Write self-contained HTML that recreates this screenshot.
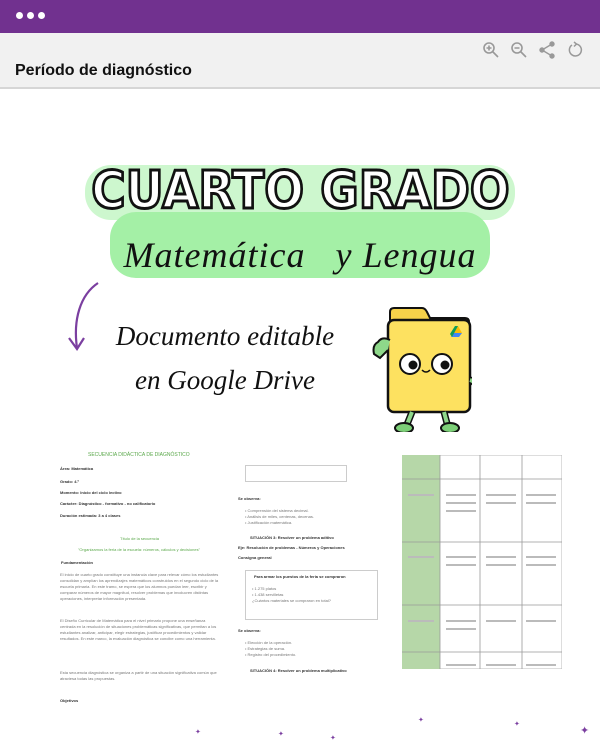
<!DOCTYPE html>
<html><head><meta charset="utf-8">
<style>
*{margin:0;padding:0;box-sizing:border-box}
body{width:600px;height:750px;overflow:hidden;background:#fff;font-family:"Liberation Sans",sans-serif;position:relative}
.top{position:absolute;left:0;top:0;width:600px;height:33px;background:#71318f}
.dot{position:absolute;top:12px;width:7px;height:7px;border-radius:50%;background:#fff}
.hdr{position:absolute;left:0;top:33px;width:600px;height:56px;background:#f1f1f1;border-bottom:2px solid #d6d6d6}
.hdr h1{position:absolute;left:15px;top:29px;font-size:16px;font-weight:bold;color:#111}
.ic{position:absolute;top:8px}
.t{position:absolute;font-size:4px;color:#777;line-height:6px}
.tb{position:absolute;font-size:4px;color:#333;font-weight:bold}
.star{position:absolute;color:#7b3fa0;font-size:7px}
</style></head><body>
<div class="top"><div class="dot" style="left:16px"></div><div class="dot" style="left:27px"></div><div class="dot" style="left:38px"></div></div>
<div class="hdr"><h1>Período de diagnóstico</h1>
<svg class="ic" style="left:482px" width="18" height="18" viewBox="0 0 18 18" fill="none" stroke="#999" stroke-width="1.6"><circle cx="7" cy="7" r="5"/><path d="M11 11l5 5M7 4.5v5M4.5 7h5"/></svg>
<svg class="ic" style="left:510px" width="18" height="18" viewBox="0 0 18 18" fill="none" stroke="#999" stroke-width="1.6"><circle cx="7" cy="7" r="5"/><path d="M11 11l5 5M4.5 7h5"/></svg>
<svg class="ic" style="left:538px" width="18" height="18" viewBox="0 0 18 18" fill="#999" stroke="#999" stroke-width="1.4"><circle cx="14" cy="3" r="2"/><circle cx="4" cy="9" r="2"/><circle cx="14" cy="15" r="2"/><path d="M14 3L4 9l10 6" fill="none"/></svg>
<svg class="ic" style="left:566px" width="18" height="18" viewBox="0 0 18 18" fill="none" stroke="#999" stroke-width="1.5"><path d="M6 4a6 6 0 1 0 4-1"/><path d="M8 1l2.5 2L8 5.5"/></svg>
</div>

<div style="position:absolute;left:110px;top:212px;width:380px;height:66px;background:#a4f0a6;border-radius:26px"></div>
<div style="position:absolute;left:85px;top:165px;width:430px;height:55px;background:#a4f0a6;border-radius:26px;opacity:.55"></div>
<div style="position:absolute;left:0;top:162px;width:600px;text-align:center;white-space:nowrap;font-size:52px;font-weight:bold;color:#fff;-webkit-text-stroke:3px #111;line-height:58px;font-family:'DejaVu Sans','Liberation Sans',sans-serif"><span style="display:inline-block;transform:scaleX(0.9)">CUARTO GRADO</span></div>
<div style="position:absolute;left:0;top:234px;width:600px;text-align:center;white-space:nowrap;font-family:'Liberation Serif',serif;font-style:italic;font-size:36px;color:#111;letter-spacing:1px">Matemática &nbsp;&nbsp;y Lengua</div>

<svg style="position:absolute;left:65px;top:280px" width="40" height="75" viewBox="0 0 40 75" fill="none" stroke="#7b3fa0" stroke-width="2.2"><path d="M33 3C15 15 8 40 12 68"/><path d="M4 58l8 11 7-11"/></svg>
<div style="position:absolute;left:95px;top:314px;width:260px;font-family:'Liberation Serif',serif;font-style:italic;font-size:27px;color:#111;text-align:center;line-height:44px;white-space:nowrap">Documento editable<br>en Google Drive</div>

<svg style="position:absolute;left:362px;top:300px" width="110" height="132" viewBox="0 0 110 132">
<path d="M28 26V12q0-4 4-4h28q3 0 5 4l3 6h35q4 0 4 4v8z" fill="#f6d24a" stroke="#111" stroke-width="2"/>
<rect x="26" y="20" width="82" height="92" rx="6" fill="#fde160" stroke="#111" stroke-width="2.5"/>
<path d="M28 40q-8-4-12 2-6 3-4 12l6 4 8-8" fill="#8ed88a" stroke="#111" stroke-width="2"/>
<path d="M108 80q10 3 6 20" fill="none" stroke="#111" stroke-width="7"/><path d="M108 80q10 3 6 20" fill="none" stroke="#8ed88a" stroke-width="4"/>
<path d="M50 112l-6 15M82 112l4 15" stroke="#111" stroke-width="7"/><path d="M50 112l-6 15M82 112l4 15" stroke="#8ed88a" stroke-width="4"/>
<ellipse cx="42" cy="128" rx="9" ry="5" fill="#7ccf77" stroke="#111" stroke-width="2"/><ellipse cx="88" cy="128" rx="9" ry="5" fill="#7ccf77" stroke="#111" stroke-width="2"/>
<circle cx="48" cy="64" r="10" fill="#fff" stroke="#111" stroke-width="2"/><circle cx="51" cy="65" r="4.5" fill="#111"/>
<circle cx="80" cy="64" r="10" fill="#fff" stroke="#111" stroke-width="2"/><circle cx="83" cy="65" r="4.5" fill="#111"/>
<path d="M60 70q4 4 8 0" fill="none" stroke="#111" stroke-width="1.5"/>
<path d="M96 26l4 7h-8z" fill="#fbbc04"/><path d="M92 33h8l-3 4h-8z" fill="#4285f4"/><path d="M96 26l-6 11-2-3 5-8z" fill="#0f9d58"/>
</svg>

<div style="position:absolute;left:88px;top:452px;font-size:5px;color:#5aa84a">SECUENCIA DIDÁCTICA DE DIAGNÓSTICO</div>
<div class="tb" style="left:60px;top:466px">Área: Matemática</div>
<div class="tb" style="left:60px;top:479px">Grado: 4.º</div>
<div class="tb" style="left:60px;top:490px">Momento: Inicio del ciclo lectivo</div>
<div class="tb" style="left:60px;top:501px">Carácter: Diagnóstico - formativo - no calificatorio</div>
<div class="tb" style="left:60px;top:513px">Duración estimada: 3 a 4 clases</div>
<div style="position:absolute;left:120px;top:536px;font-size:4px;color:#5aa84a">Título de la secuencia</div>
<div style="position:absolute;left:78px;top:547px;font-size:4px;color:#5aa84a">"Organizamos la feria de la escuela: números, cálculos y decisiones"</div>
<div class="tb" style="left:61px;top:560px">Fundamentación</div>
<div class="t" style="left:60px;top:572px;width:160px">El inicio de cuarto grado constituye una instancia clave para relevar cómo los estudiantes consolidan y amplían los aprendizajes matemáticos construidos en el segundo ciclo de la escuela primaria. En este tramo, se espera que los alumnos puedan leer, escribir y comparar números de mayor magnitud, resolver problemas que involucren distintas operaciones, interpretar información presentada.</div>
<div class="t" style="left:60px;top:618px;width:160px">El Diseño Curricular de Matemática para el nivel primario propone una enseñanza centrada en la resolución de situaciones problemáticas significativas, que permitan a los estudiantes analizar, anticipar, elegir estrategias, justificar procedimientos y validar resultados. En este marco, la evaluación diagnóstica se concibe como una herramienta.</div>
<div class="t" style="left:60px;top:670px;width:160px">Esta secuencia diagnóstica se organiza a partir de una situación significativa común que atraviesa todas las propuestas.</div>
<div class="tb" style="left:60px;top:698px">Objetivos</div>

<div style="position:absolute;left:245px;top:465px;width:102px;height:17px;border:1px solid #ccc"></div>
<div class="tb" style="left:238px;top:496px">Se observa:</div>
<div class="t" style="left:245px;top:508px;width:140px">• Comprensión del sistema decimal.<br>• Análisis de miles, centenas, decenas.<br>• Justificación matemática.</div>
<div class="tb" style="left:250px;top:535px">SITUACIÓN 3: Resolver un problema aditivo</div>
<div class="tb" style="left:238px;top:545px">Eje: Resolución de problemas - Números y Operaciones</div>
<div class="tb" style="left:238px;top:555px">Consigna general</div>
<div style="position:absolute;left:245px;top:570px;width:133px;height:50px;border:1px solid #ccc"></div>
<div class="tb" style="left:254px;top:574px">Para armar los puestos de la feria se compraron</div>
<div class="t" style="left:252px;top:586px;width:120px">• 1.275 platos<br>• 1.438 servilletas<br>¿Cuántos materiales se compraron en total?</div>
<div class="tb" style="left:238px;top:628px">Se observa:</div>
<div class="t" style="left:245px;top:640px;width:140px">• Elección de la operación.<br>• Estrategias de suma.<br>• Registro del procedimiento.</div>
<div class="tb" style="left:250px;top:668px">SITUACIÓN 4: Resolver un problema multiplicativo</div>

<svg style="position:absolute;left:402px;top:455px" width="160" height="214" viewBox="0 0 160 214">
<rect x="0" y="0" width="160" height="214" fill="#fff" stroke="#bbb"/>
<rect x="0" y="0" width="38" height="214" fill="#b6d7a8"/>
<g stroke="#999" stroke-width="0.8"><path d="M38 0v214M78 0v214M120 0v214M0 24h160M0 87h160M0 150h160M0 197h160"/></g>
<g stroke="#bbb" stroke-width="2"><path d="M44 40h30M44 48h30M44 56h30M84 40h30M84 48h30M124 40h30M124 48h30M44 102h30M44 110h30M84 102h30M84 110h30M124 102h30M124 110h30M44 166h30M44 174h30M84 166h30M124 166h30M44 210h30M84 210h30M124 210h30M6 40h26M6 102h26M6 166h26"/></g>
</svg>
<div class="star" style="left:195px;top:728px">✦</div>
<div class="star" style="left:278px;top:730px">✦</div>
<div class="star" style="left:330px;top:734px">✦</div>
<div class="star" style="left:418px;top:716px">✦</div>
<div class="star" style="left:514px;top:720px">✦</div>
<div class="star" style="left:580px;top:724px;font-size:11px">✦</div>
</body></html>
